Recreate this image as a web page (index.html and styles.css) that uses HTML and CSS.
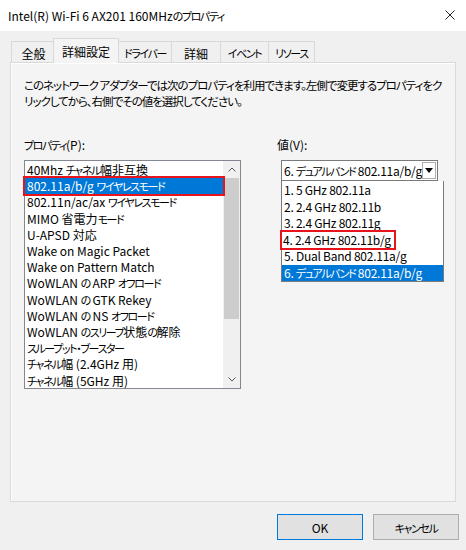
FILE: index.html
```html
<!DOCTYPE html>
<html lang="ja">
<head>
  <meta charset="UTF-8" />
  <title>Intel(R) Wi-Fi 6 AX201 160MHzのプロパティ</title>
  <link rel="stylesheet" href="styles.css">
</head>
<body>
  <div class="titlebar">
    <span class="title">Intel(R) Wi-Fi 6 AX201 160MHz<span class="k">のプロパティ</span></span>
    <svg class="close" width="10" height="10" viewBox="0 0 10 10">
      <path d="M0.5 0.5 L9.5 9.5 M9.5 0.5 L0.5 9.5" stroke="#222" stroke-width="1" fill="none" />
    </svg>
  </div>

  <div class="dialog">
    <div class="tabs">
      <div class="tab">全般</div>
      <div class="tab active">詳細設定</div>
      <div class="tab"><span class="k">ドライバー</span></div>
      <div class="tab">詳細</div>
      <div class="tab"><span class="k">イベント</span></div>
      <div class="tab"><span class="k">リソース</span></div>
    </div>

    <div class="page">
      <p class="desc">このネットワーク アダプターでは次のプロパティを利用できます。左側で変更するプロパティをク<br>リックしてから、右側でその値を選択してください。</p>

      <div class="columns">
        <div class="col">
          <div class="label"><span class="k">プロパティ</span>(P):</div>
          <div class="listbox">
            <ul class="items">
              <li>40Mhz <span class="k">チャネル</span>幅非互換</li>
              <li class="selected marked">802.11a/b/g <span class="k">ワイヤレスモード</span></li>
              <li>802.11n/ac/ax <span class="k">ワイヤレスモード</span></li>
              <li>MIMO 省電力<span class="k">モード</span></li>
              <li>U-APSD 対応</li>
              <li>Wake on Magic Packet</li>
              <li>Wake on Pattern Match</li>
              <li>WoWLAN <span class="k">の</span> ARP <span class="k">オフロード</span></li>
              <li>WoWLAN <span class="k">の</span> GTK Rekey</li>
              <li>WoWLAN <span class="k">の</span> NS <span class="k">オフロード</span></li>
              <li>WoWLAN <span class="k">のスリープ</span>状態<span class="k">の</span>解除</li>
              <li><span class="k">スループット・ブースター</span></li>
              <li><span class="k">チャネル</span>幅 (2.4GHz 用)</li>
              <li><span class="k">チャネル</span>幅 (5GHz 用)</li>
            </ul>
            <div class="scrollbar">
              <div class="arrow">
                <svg width="8" height="5" viewBox="0 0 8 5"><path d="M0.5 4.5 L4 1 L7.5 4.5" stroke="#555" fill="none" /></svg>
              </div>
              <div class="track"><div class="thumb"></div></div>
              <div class="arrow">
                <svg width="8" height="5" viewBox="0 0 8 5"><path d="M0.5 0.5 L4 4 L7.5 0.5" stroke="#555" fill="none" /></svg>
              </div>
            </div>
          </div>
        </div>

        <div class="col">
          <div class="label">値(V):</div>
          <div class="combo">
            <span class="combo-text">6. <span class="k">デュアルバンド</span> 802.11a/b/g</span>
            <span class="combo-btn">
              <svg width="8" height="5" viewBox="0 0 8 5"><path d="M0 0 L8 0 L4 5 Z" fill="#000" /></svg>
            </span>
          </div>
          <ul class="dropdown">
            <li>1. 5 GHz 802.11a</li>
            <li>2. 2.4 GHz 802.11b</li>
            <li>3. 2.4 GHz 802.11g</li>
            <li><span class="mark">4. 2.4 GHz 802.11b/g</span></li>
            <li>5. Dual Band 802.11a/g</li>
            <li class="selected">6. <span class="k">デュアルバンド</span> 802.11a/b/g</li>
          </ul>
        </div>
      </div>
    </div>
  </div>

  <div class="buttons">
    <button class="default">OK</button>
    <button><span class="k">キャンセル</span></button>
  </div>
</body>
</html>
```

FILE: styles.css
```css
body {
  margin: 0;
  width: 466px;
  height: 550px;
  background-color: #f0f0f0;
  color: #000;
  font-family: "Noto Sans CJK JP", "Noto Sans", sans-serif;
  font-size: 12px;
  font-feature-settings: "palt";
  overflow: hidden;
}
ul {
  list-style: none;
  margin: 0;
  padding: 0;
}

/* kana runs are narrow in the Windows UI font */
.k {
  font-size: 11px;
  letter-spacing: -1.4px;
}

.titlebar {
  height: 31px;
  background-color: #fff;
  display: flex;
  align-items: center;
  justify-content: space-between;
  padding: 0 11px 0 8px;
}
.close {
  margin-top: -1px;
}

.dialog {
  padding: 7px 10px 0 10px;
}

/* tab strip */
.tabs {
  display: flex;
  align-items: flex-end;
  height: 24px;
  margin-left: 1px;
}
.tab {
  height: 21px;
  box-sizing: border-box;
  margin-right: -1px;
  border: 1px solid #d9d9d9;
  border-bottom: none;
  background-color: #f0f0f0;
  display: flex;
  align-items: center;
  justify-content: center;
  padding-top: 2px;
}
.tab:nth-child(1) { width: 45px; }
.tab:nth-child(3) { width: 54px; }
.tab:nth-child(4) { width: 50px; }
.tab:nth-child(5) { width: 49px; }
.tab:nth-child(6) { width: 47px; }
.tab.active {
  width: 66px;
  height: 25px;
  padding-top: 0;
  margin: 0 -1px -1px -2px;
  background-color: #f4f4f4;
  position: relative;
  z-index: 1;
}

.page {
  height: 440px;
  box-sizing: border-box;
  border: 1px solid #d9d9d9;
  background-color: #f4f4f4;
  box-shadow: inset 1px 1px 0 #fff;
  padding: 14px 13px 0 13px;
}
.desc {
  margin: 0;
  line-height: 16px;
  font-size: 11.5px;
  letter-spacing: -1px;
  white-space: nowrap;
}

.columns {
  display: grid;
  grid-template-columns: 217px 1fr;
  column-gap: 36px;
  margin-top: 28px;
}
.label {
  line-height: 16px;
  margin-bottom: 7px;
}

/* property list */
.listbox {
  display: flex;
  height: 229px;
  box-sizing: border-box;
  border: 1px solid #828790;
  background-color: #fff;
}
.items {
  flex: 1;
  padding-top: 1px;
}
.items li,
.dropdown li {
  line-height: 16.2px;
  padding-left: 2px;
  white-space: nowrap;
}
.items li.marked {
  outline: 2px solid #e8141c;
  outline-offset: 0;
  position: relative;
}
.selected {
  background-color: #0078d7;
  color: #fff;
}

.scrollbar {
  width: 17px;
  display: flex;
  flex-direction: column;
  background-color: #f0f0f0;
}
.arrow {
  height: 17px;
  display: flex;
  align-items: center;
  justify-content: center;
}
.track {
  flex: 1;
  padding: 0 1px;
}
.thumb {
  height: 141px;
  background-color: #cdcdcd;
}

/* value combo */
.combo {
  display: flex;
  align-items: center;
  height: 21px;
  width: 157px;
  margin-left: 4px;
  box-sizing: border-box;
  border: 1px solid #7a7a7a;
  background-color: #fff;
  padding: 0 1px 0 2px;
  letter-spacing: -0.25px;
}
.combo-text {
  flex: 1;
  white-space: nowrap;
  overflow: hidden;
}
.combo-btn {
  width: 12px;
  height: 15px;
  flex-shrink: 0;
  border: 1px solid #adadad;
  display: flex;
  align-items: center;
  justify-content: center;
}
.dropdown {
  width: 163px;
  margin-left: 4px;
  box-sizing: border-box;
  border: 1px solid #7a7a7a;
  border-top: none;
  background-color: #fff;
  padding-top: 1px;
  letter-spacing: -0.25px;
}
.dropdown li {
  line-height: 16.5px;
}
.mark {
  display: inline-block;
  outline: 2px solid #e8141c;
  outline-offset: 0;
  padding: 0 3px 0 1px;
  margin-left: -2px;
}

/* footer buttons */
.buttons {
  display: flex;
  justify-content: flex-end;
  gap: 10px;
  padding-right: 7px;
  margin-top: 12px;
}
button {
  width: 86px;
  height: 26px;
  background-color: #e1e1e1;
  border: 1px solid #adadad;
  font-family: inherit;
  font-size: 12px;
  font-feature-settings: "palt";
  color: #000;
  padding: 0;
}
button.default {
  border-color: #0078d7;
}
```
